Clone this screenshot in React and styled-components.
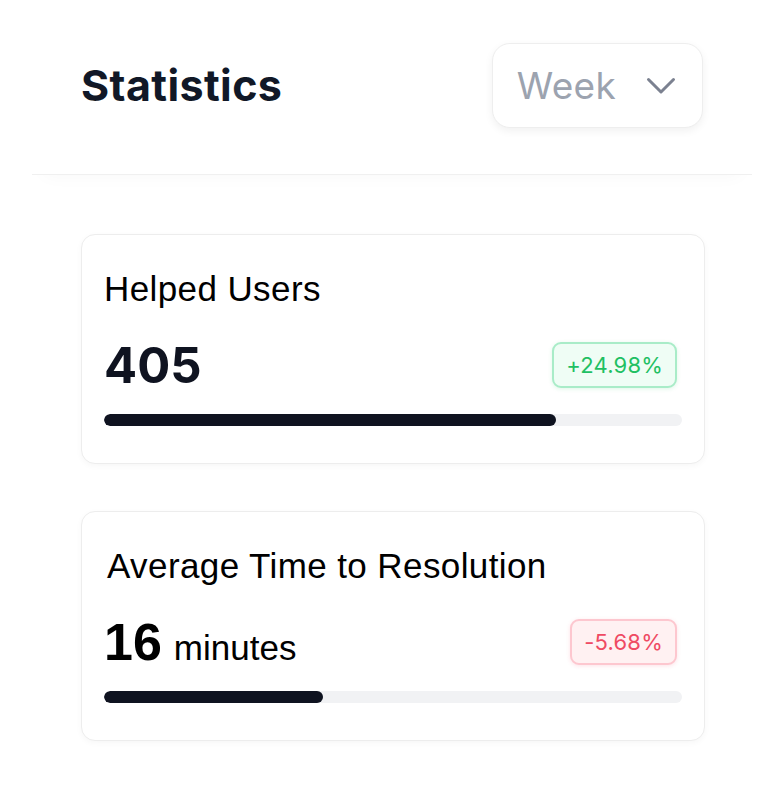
import React from "react";
import styled, { createGlobalStyle } from "styled-components";

const Global = createGlobalStyle`
  html, body { margin: 0; padding: 0; background: #ffffff; }
  body { font-family: Inter, "Liberation Sans", sans-serif; -webkit-font-smoothing: antialiased; }
  * { box-sizing: border-box; }
`;

const Page = styled.div`
  width: 784px;
  min-height: 792px;
  background: #ffffff;
`;

const Header = styled.header`
  margin: 0 32px;
  padding: 43px 49px 46px 49px;
  display: flex;
  align-items: center;
  justify-content: space-between;
  border-bottom: 1px solid #f0f0f0;
  box-shadow: 0 12px 18px -12px rgba(0, 0, 0, 0.035);
`;

const Title = styled.h1`
  margin: 0;
  font-family: Inter, sans-serif;
  font-weight: 700;
  font-size: 43px;
  letter-spacing: 0.4px;
  color: #111827;
  line-height: 1;
`;

const Select = styled.button`
  display: flex;
  align-items: center;
  gap: 30px;
  height: 85px;
  padding: 0 26px 0 24px;
  background: #ffffff;
  border: 1px solid #eeeeee;
  border-radius: 18px;
  box-shadow: 0 3px 8px rgba(0, 0, 0, 0.06);
  font-family: Inter, sans-serif;
  font-size: 37px;
  letter-spacing: 0.3px;
  color: #9ca3af;
  cursor: pointer;
`;

const Cards = styled.main`
  display: flex;
  flex-direction: column;
  gap: 47px;
  margin: 0 79px 0 81px;
  padding-top: 59px;
`;

const Card = styled.section`
  border: 1px solid #ededed;
  border-radius: 14px;
  background: #ffffff;
  box-shadow: 0 2px 6px rgba(0, 0, 0, 0.035);
  padding: 33px 22px 37px 22px;
`;

const Label = styled.div`
  font-family: "Liberation Sans", Arial, sans-serif;
  font-size: 35px;
  letter-spacing: 0.4px;
  line-height: 41px;
  color: #000000;
  padding-left: ${(p) => p.$indent || "0px"};
`;

const Row = styled.div`
  margin-top: 33px;
  height: 46px;
  display: flex;
  align-items: center;
  justify-content: space-between;
`;

const Number = styled.span`
  font-family: Inter, sans-serif;
  font-weight: 700;
  font-size: 49px;
  color: #0f1320;
  line-height: 1;
`;

const Value = styled.span`
  display: flex;
  align-items: baseline;
  line-height: 1;
  font-family: "Liberation Sans", Arial, sans-serif;
`;

const BigBold = styled.span`
  font-weight: 700;
  font-size: 52px;
  color: #000000;
`;

const Unit = styled.span`
  font-size: 35px;
  color: #000000;
  margin-left: 12px;
`;

const tones = {
  up: { fg: "#1fc063", bg: "#effdf5", border: "#a9ecc8", glow: "rgba(34,197,94,0.15)" },
  down: { fg: "#ef4a63", bg: "#fff1f2", border: "#fdc7cf", glow: "rgba(244,63,94,0.15)" },
};

const Badge = styled.span`
  display: flex;
  align-items: center;
  height: 46px;
  padding: 0 12px;
  margin-right: 5px;
  border-radius: 9px;
  border: 2px solid ${(p) => tones[p.$tone].border};
  background: ${(p) => tones[p.$tone].bg};
  box-shadow: 0 1px 4px ${(p) => tones[p.$tone].glow};
  color: ${(p) => tones[p.$tone].fg};
  font-family: Inter, sans-serif;
  font-size: 22px;
  letter-spacing: 0.2px;
`;

const Track = styled.div`
  margin-top: 26px;
  height: 12px;
  border-radius: 6px;
  background: #f1f2f4;
  overflow: hidden;
`;

const Fill = styled.div`
  height: 100%;
  border-radius: 6px;
  background: #0f1320;
`;

const Chevron = () => (
  <svg width="30" height="18" viewBox="0 0 30 18" fill="none">
    <polyline
      points="2.5,2.5 15,15 27.5,2.5"
      stroke="#7b8190"
      strokeWidth="3"
      strokeLinecap="round"
      strokeLinejoin="round"
    />
  </svg>
);

export default function App() {
  return (
    <Page>
      <Global />
      <Header>
        <Title>Statistics</Title>
        <Select type="button">
          Week
          <Chevron />
        </Select>
      </Header>
      <Cards>
        <Card>
          <Label>Helped Users</Label>
          <Row>
            <Number>405</Number>
            <Badge $tone="up">+24.98%</Badge>
          </Row>
          <Track>
            <Fill style={{ width: "78.2%" }} />
          </Track>
        </Card>
        <Card>
          <Label $indent="3px">Average Time to Resolution</Label>
          <Row>
            <Value>
              <BigBold>16</BigBold>
              <Unit>minutes</Unit>
            </Value>
            <Badge $tone="down">-5.68%</Badge>
          </Row>
          <Track>
            <Fill style={{ width: "37.9%" }} />
          </Track>
        </Card>
      </Cards>
    </Page>
  );
}
